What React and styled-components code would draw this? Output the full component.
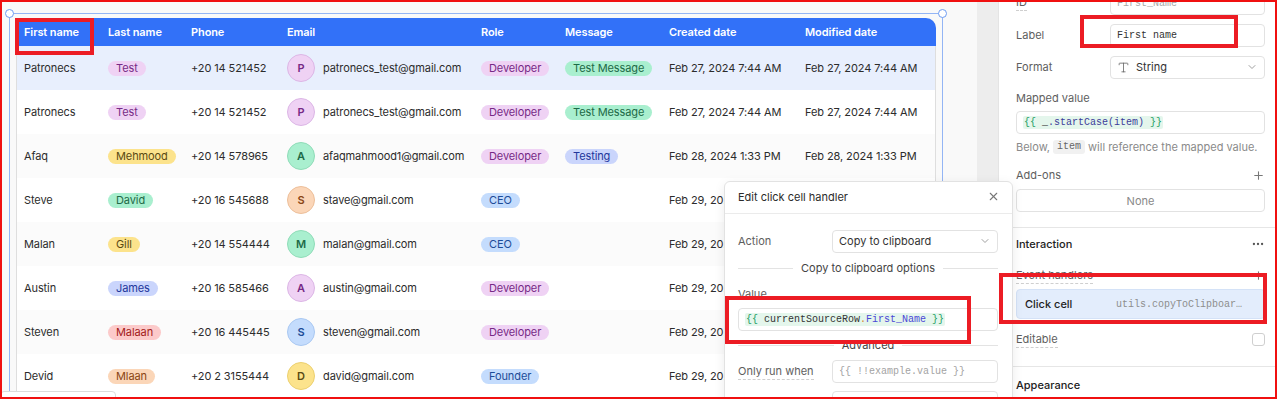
import React from 'react';
import styled, { createGlobalStyle } from 'styled-components';
import { ChevronDown, X, Plus, Ellipsis, Type } from 'lucide-react';

const GlobalStyle = createGlobalStyle`
  html, body { margin: 0; padding: 0; }
  body {
    font-family: Inter, "Noto Sans", sans-serif;
    font-size: 11px;
    color: #2b2b2b;
    background: #fff;
  }
  * { box-sizing: border-box; }
`;

const tones = {
  purple: { bg: '#efd2f4', fg: '#772a86', line: '#dcb6e6' },
  green: { bg: '#a9efcf', fg: '#1d6a47', line: '#8fdcb8' },
  yellow: { bg: '#fce38c', fg: '#5a4a12', line: '#ecd06f' },
  indigo: { bg: '#cad5fc', fg: '#22369b', line: '#b2c0f2' },
  red: { bg: '#fccaca', fg: '#a31b1b', line: '#f0b0b0' },
  orange: { bg: '#fbd6b8', fg: '#8a4514', line: '#edbf9a' },
  blue: { bg: '#c4dcfd', fg: '#1d4c98', line: '#a9c8f2' },
};

const Screen = styled.div`
  position: relative;
  width: 1277px;
  height: 399px;
  overflow: hidden;
  display: flex;
  background: #f9f9f9;
`;

const Canvas = styled.div`
  width: 977px;
  flex: none;
  padding: 13px 0 0 9px;
  overflow: hidden;
`;

const Selection = styled.div`
  position: relative;
  width: 934px;
  height: 420px;
  border: 1px solid #93b5f5;
  padding: 4px 6px 0 6px;
`;

const Handle = styled.span`
  position: absolute;
  top: -5px;
  ${(p) => (p.right ? 'right: -5px;' : 'left: -5px;')}
  width: 9px;
  height: 9px;
  border-radius: 50%;
  background: #fff;
  border: 1.5px solid #6e9cf2;
`;

const Table = styled.div`
  width: 920px;
  border-left: 1px solid #dedede;
  border-right: 1px solid #dedede;
  border-radius: 10px 10px 0 0;
  background: #fff;
`;

const cols = '84px 83px 96px 194px 84px 104px 136px 137px';

const HeadRow = styled.div`
  display: grid;
  grid-template-columns: ${cols};
  height: 28px;
  align-items: center;
  background: #3271f8;
  border-radius: 10px 10px 0 0;
  margin: 0 -1px;
  padding: 0 1px;
`;

const HeadCell = styled.div`
  padding-left: 7px;
  color: #fff;
  font-weight: 600;
  font-size: 11px;
  letter-spacing: -0.1px;
  white-space: nowrap;
`;

const Row = styled.div`
  display: grid;
  grid-template-columns: ${cols};
  height: 44px;
  align-items: center;
  background: ${(p) => (p.active ? '#e8effd' : p.alt ? '#fbfbfb' : '#fff')};
`;

const Cell = styled.div`
  padding-left: 7px;
  font-size: 11px;
  letter-spacing: -0.1px;
  color: #2c2c2c;
  white-space: nowrap;
  display: flex;
  align-items: center;
  gap: 8px;
`;

const Tag = styled.span`
  display: inline-block;
  height: 15px;
  line-height: 15px;
  padding: 0 8px;
  border-radius: 8px;
  font-size: 11px;
  background: ${(p) => tones[p.tone].bg};
  color: ${(p) => tones[p.tone].fg};
`;

const Avatar = styled.span`
  width: 28px;
  height: 28px;
  flex: none;
  border-radius: 50%;
  display: flex;
  align-items: center;
  justify-content: center;
  font-size: 11px;
  font-weight: 600;
  background: ${(p) => tones[p.tone].bg};
  color: ${(p) => tones[p.tone].fg};
  border: 1px solid ${(p) => tones[p.tone].line};
`;

const Strip = styled.div`
  width: 21px;
  flex: none;
  background: #ededed;
`;

const Panel = styled.div`
  flex: 1;
  background: #fff;
  border-left: 1px solid #e4e4e4;
  padding: 0 12px 0 17px;
`;

const PanelInner = styled.div`
  margin-top: -13px;
  display: flex;
  flex-direction: column;
`;

const FieldRow = styled.div`
  display: grid;
  grid-template-columns: 94px 1fr;
  align-items: center;
  height: ${(p) => p.h || 32}px;
  margin-top: ${(p) => p.mt || 0}px;
`;

const Label = styled.span`
  font-size: 11px;
  color: #5e5e5e;
  line-height: 16px;
  white-space: nowrap;
  ${(p) => p.dotted && 'border-bottom: 1px dashed #cfcfcf; justify-self: start; line-height: 15px;'}
`;

const Box = styled.div`
  height: 23px;
  border: 1px solid #e2e2e2;
  border-radius: 4px;
  background: #fff;
  display: flex;
  align-items: center;
  padding: 0 6px;
  gap: 6px;
  font-size: 11px;
  color: #333;
  white-space: nowrap;
  margin-top: ${(p) => p.mt || 0}px;
  justify-content: ${(p) => (p.center ? 'center' : 'flex-start')};
`;

const Mono = styled.span`
  font-family: "Liberation Mono", "DejaVu Sans Mono", monospace;
  font-size: 10px;
  color: ${(p) => p.color || '#333'};
  white-space: nowrap;
`;

const CodeHighlight = styled.span`
  font-family: "Liberation Mono", "DejaVu Sans Mono", monospace;
  font-size: 10px;
  background: #e4f6ec;
  border-radius: 2px;
  padding: 1px 1px;
  color: #333;
  white-space: nowrap;
`;

const Tok = styled.span`
  color: ${(p) => p.c};
`;

const Spacer = styled.span`
  flex: 1;
`;

const Caption = styled.div`
  font-size: 11px;
  line-height: 16px;
  height: 16px;
  white-space: nowrap;
  color: ${(p) => p.color || '#5e5e5e'};
  font-weight: ${(p) => p.weight || 400};
  margin-top: ${(p) => p.mt || 0}px;
  display: flex;
  align-items: center;
  justify-content: ${(p) => (p.start ? 'flex-start' : 'space-between')};
`;

const Chip = styled.span`
  font-family: "Liberation Mono", "DejaVu Sans Mono", monospace;
  font-size: 10px;
  line-height: 14px;
  color: #666;
  background: #f1f1f1;
  border-radius: 3px;
  padding: 0 4px;
  margin: 0 3px;
`;

const Divider = styled.div`
  height: 1px;
  background: #e6e6e6;
  margin: ${(p) => p.mt || 0}px -12px 0 -17px;
`;

const Dotted = styled.span`
  border-bottom: 1px dashed #cfcfcf;
`;

const HandlerItem = styled.div`
  margin-top: 6px;
  height: 30px;
  border-radius: 4px;
  background: #e3edfc;
  border: 1px solid #d4e2f7;
  display: grid;
  grid-template-columns: 91px 1fr;
  align-items: center;
  padding-left: 8px;
  font-size: 11px;
  font-weight: 500;
  color: #1f1f1f;
`;

const Checkbox = styled.span`
  width: 13px;
  height: 13px;
  border: 1px solid #cfcfcf;
  border-radius: 3px;
  background: #fff;
`;

const Popover = styled.div`
  position: absolute;
  left: 724px;
  top: 181px;
  width: 289px;
  height: 240px;
  background: #fff;
  border: 1px solid #e2e2e2;
  border-radius: 6px;
  box-shadow: 0 3px 12px rgba(0, 0, 0, 0.08);
`;

const PopHeader = styled.div`
  height: 32px;
  display: flex;
  align-items: center;
  justify-content: space-between;
  padding: 0 12px 2px 13px;
  border-bottom: 1px solid #ebebeb;
  font-size: 11px;
  color: #2b2b2b;
`;

const PopBody = styled.div`
  padding: 0 14px 0 13px;
  display: flex;
  flex-direction: column;
`;

const Rule = styled.div`
  display: flex;
  align-items: center;
  height: 16px;
  margin-top: ${(p) => p.mt || 0}px;
  font-size: 11px;
  color: #444;
  white-space: nowrap;
  &::before, &::after {
    content: '';
    flex: 1;
    height: 1px;
    background: #e3e3e3;
  }
  span { padding: 0 8px; }
`;

const Mark = styled.div`
  position: absolute;
  border: 4px solid #ec1c24;
  pointer-events: none;
`;

const Frame = styled.div`
  position: absolute;
  inset: 0;
  border: 2px solid #f01010;
  pointer-events: none;
`;

const Footer = styled.div`
  position: absolute;
  left: 0;
  top: 391px;
  width: 116px;
  height: 20px;
  background: #fff;
  border: 1px solid #dcdcdc;
  border-radius: 4px;
`;

const rows = [
  ['Patronecs', ['Test', 'purple'], '+20 14 521452', ['P', 'purple'], 'patronecs_test@gmail.com', ['Developer', 'purple'], ['Test Message', 'green'], 'Feb 27, 2024 7:44 AM', 'Feb 27, 2024 7:44 AM'],
  ['Patronecs', ['Test', 'purple'], '+20 14 521452', ['P', 'purple'], 'patronecs_test@gmail.com', ['Developer', 'purple'], ['Test Message', 'green'], 'Feb 27, 2024 7:44 AM', 'Feb 27, 2024 7:44 AM'],
  ['Afaq', ['Mehmood', 'yellow'], '+20 14 578965', ['A', 'green'], 'afaqmahmood1@gmail.com', ['Developer', 'purple'], ['Testing', 'indigo'], 'Feb 28, 2024 1:33 PM', 'Feb 28, 2024 1:33 PM'],
  ['Steve', ['David', 'green'], '+20 16 545688', ['S', 'orange'], 'stave@gmail.com', ['CEO', 'blue'], null, 'Feb 29, 2024 9:12 AM', 'Feb 29, 2024 9:12 AM'],
  ['Malan', ['Gill', 'yellow'], '+20 14 554444', ['M', 'green'], 'malan@gmail.com', ['CEO', 'blue'], null, 'Feb 29, 2024 9:14 AM', 'Feb 29, 2024 9:14 AM'],
  ['Austin', ['James', 'indigo'], '+20 16 585466', ['A', 'purple'], 'austin@gmail.com', ['Developer', 'purple'], null, 'Feb 29, 2024 9:15 AM', 'Feb 29, 2024 9:15 AM'],
  ['Steven', ['Malaan', 'red'], '+20 16 445445', ['S', 'blue'], 'steven@gmail.com', ['Developer', 'purple'], null, 'Feb 29, 2024 9:17 AM', 'Feb 29, 2024 9:17 AM'],
  ['Devid', ['Mlaan', 'orange'], '+20 2 3155444', ['D', 'yellow'], 'david@gmail.com', ['Founder', 'blue'], null, 'Feb 29, 2024 9:20 AM', 'Feb 29, 2024 9:20 AM'],
];

const headers = ['First name', 'Last name', 'Phone', 'Email', 'Role', 'Message', 'Created date', 'Modified date'];

function App() {
  return (
    <Screen>
      <GlobalStyle />
      <Canvas>
        <Selection>
          <Handle />
          <Handle right />
          <Table>
            <HeadRow>
              {headers.map((h) => (
                <HeadCell key={h}>{h}</HeadCell>
              ))}
            </HeadRow>
            {rows.map((r, i) => (
              <Row key={i} active={i === 0} alt={i % 2 === 0}>
                <Cell>{r[0]}</Cell>
                <Cell><Tag tone={r[1][1]}>{r[1][0]}</Tag></Cell>
                <Cell>{r[2]}</Cell>
                <Cell>
                  <Avatar tone={r[3][1]}>{r[3][0]}</Avatar>
                  {r[4]}
                </Cell>
                <Cell><Tag tone={r[5][1]}>{r[5][0]}</Tag></Cell>
                <Cell>{r[6] && <Tag tone={r[6][1]}>{r[6][0]}</Tag>}</Cell>
                <Cell>{r[7]}</Cell>
                <Cell>{r[8]}</Cell>
              </Row>
            ))}
          </Table>
        </Selection>
      </Canvas>
      <Strip />
      <Panel>
        <PanelInner>
          <FieldRow>
            <Label dotted>ID</Label>
            <Box><Mono color="#a8a8a8">First_Name</Mono></Box>
          </FieldRow>
          <FieldRow>
            <Label>Label</Label>
            <Box><Mono>First name</Mono></Box>
          </FieldRow>
          <FieldRow>
            <Label>Format</Label>
            <Box>
              <Type size={13} color="#666" strokeWidth={1.5} />
              String
              <Spacer />
              <ChevronDown size={12} color="#a0a0a0" />
            </Box>
          </FieldRow>
          <Caption mt={7}>Mapped value</Caption>
          <Box mt={5}>
            <CodeHighlight>
              <Tok c="#1fa063">{'{{'}</Tok> <Tok c="#333">_</Tok><Tok c="#3c3c9a">.startCase(item)</Tok> <Tok c="#1fa063">{'}}'}</Tok>
            </CodeHighlight>
          </Box>
          <Caption mt={5} color="#8a8a8a" start>
            Below,<Chip>item</Chip>will reference the mapped value.
          </Caption>
          <Caption mt={12}>
            Add-ons
            <Plus size={13} color="#777" />
          </Caption>
          <Box mt={6} center>
            <span style={{ color: '#888' }}>None</span>
          </Box>
          <Divider mt={15} />
          <Caption mt={8} color="#222" weight={500}>
            Interaction
            <Ellipsis size={14} color="#555" />
          </Caption>
          <Caption mt={15}>
            <Dotted>Event handlers</Dotted>
            <Plus size={13} color="#777" />
          </Caption>
          <HandlerItem>
            Click cell
            <Mono color="#8d8d8d">utils.copyToClipboar…</Mono>
          </HandlerItem>
          <Caption mt={12}>
            <Dotted>Editable</Dotted>
            <Checkbox />
          </Caption>
          <Divider mt={19} />
          <Caption mt={10} color="#222" weight={500}>Appearance</Caption>
        </PanelInner>
      </Panel>

      <Popover>
        <PopHeader>
          Edit click cell handler
          <X size={13} color="#777" />
        </PopHeader>
        <PopBody>
          <FieldRow h={24} mt={15}>
            <Label>Action</Label>
            <Box>
              Copy to clipboard
              <Spacer />
              <ChevronDown size={12} color="#a0a0a0" />
            </Box>
          </FieldRow>
          <Rule mt={7}><span>Copy to clipboard options</span></Rule>
          <Caption mt={10}>Value</Caption>
          <Box mt={6}>
            <CodeHighlight>
              <Tok c="#1fa063">{'{{'}</Tok> currentSourceRow<Tok c="#d9822b">.</Tok><Tok c="#4a46d6">First_Name</Tok> <Tok c="#1fa063">{'}}'}</Tok>
            </CodeHighlight>
          </Box>
          <Rule mt={6}><span>Advanced</span></Rule>
          <FieldRow h={23} mt={7}>
            <Label dotted>Only run when</Label>
            <Box><Mono color="#a3a3a3">{'{{ !!example.value }}'}</Mono></Box>
          </FieldRow>
          <FieldRow h={23} mt={8}>
            <Label dotted>Debounce</Label>
            <Box><Mono color="#a3a3a3">0</Mono></Box>
          </FieldRow>
        </PopBody>
      </Popover>

      <Footer />
      <Mark style={{ left: 15, top: 18, width: 79, height: 37 }} />
      <Mark style={{ left: 1080, top: 15, width: 158, height: 33 }} />
      <Mark style={{ left: 999, top: 273, width: 268, height: 51 }} />
      <Mark style={{ left: 725, top: 296, width: 246, height: 48 }} />
      <Frame />
    </Screen>
  );
}

export default App;
